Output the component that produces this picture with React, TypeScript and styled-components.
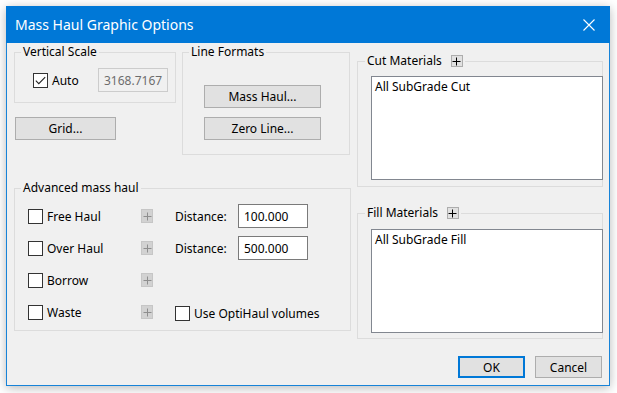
import React from 'react';
import styled, { createGlobalStyle } from 'styled-components';

const Global = createGlobalStyle`
  html, body { margin: 0; padding: 0; background: #ffffff; }
  body { font-family: "Noto Sans", "DejaVu Sans", sans-serif; font-size: 12px; color: #000; }
  * { box-sizing: border-box; }
`;

const Page = styled.div`
  width: 617px;
  height: 393px;
  padding: 6px 0 0 6px;
`;

const Window = styled.div`
  width: 604px;
  height: 380px;
  border: 1px solid #1783d8;
  border-top: none;
  background: #f0f0f0;
  box-shadow: 0 2px 10px rgba(0, 0, 0, 0.28);
  display: flex;
  flex-direction: column;
`;

const TitleBar = styled.div`
  height: 37px;
  margin: 0 -1px;
  background: #0078d7;
  color: #fff;
  display: flex;
  align-items: center;
  justify-content: space-between;
  padding-left: 9px;
  font-size: 14px;
`;

const Close = styled.div`
  width: 12px;
  height: 12px;
  margin-right: 15px;
  display: flex;
`;

const Body = styled.div`
  flex: 1;
  padding: 1px 6px 0 7px;
  display: flex;
  flex-direction: column;
`;

const Main = styled.div`
  display: flex;
  gap: 6px;
  align-items: flex-start;
`;

const LeftCol = styled.div`
  width: 337px;
  display: flex;
  flex-direction: column;
`;

const LeftTop = styled.div`
  display: flex;
  gap: 6px;
`;

const Stack = styled.div`
  display: flex;
  flex-direction: column;
`;

const RightCol = styled.div`
  width: 246px;
  margin-top: 9px;
  display: flex;
  flex-direction: column;
  gap: 18px;
`;

const Group = styled.fieldset<{ $w: number; $h: number }>`
  margin: 0;
  padding: 0;
  width: ${p => p.$w}px;
  height: ${p => p.$h}px;
  border: 1px solid #dcdcdc;
  min-width: 0;
`;

const Legend = styled.legend<{ $ml: number }>`
  margin-left: ${p => p.$ml}px;
  padding: 0 2px;
  height: 16px;
  line-height: 16px;
  font-size: 12px;
  display: flex;
  align-items: center;
`;

const ScaleRow = styled.div`
  display: flex;
  align-items: center;
  margin-top: 8px;
  padding-left: 18px;
`;

const CheckLabel = styled.label<{ $w?: number }>`
  display: flex;
  align-items: center;
  gap: 4px;
  ${p => (p.$w ? `width: ${p.$w}px;` : '')}
  white-space: nowrap;
`;

const Box = styled.span`
  width: 15px;
  height: 15px;
  border: 1px solid #333;
  background: #fff;
  display: flex;
  align-items: center;
  justify-content: center;
  flex: none;
`;

const TextBox = styled.div<{ $disabled?: boolean }>`
  width: 70px;
  height: 24px;
  border: 1px solid ${p => (p.$disabled ? '#cccccc' : '#7a7a7a')};
  background: ${p => (p.$disabled ? '#f0f0f0' : '#ffffff')};
  color: ${p => (p.$disabled ? '#6d6d6d' : '#000')};
  padding-left: 5px;
  display: flex;
  align-items: center;
  overflow: hidden;
  white-space: nowrap;
`;

const Button = styled.div<{ $w: number; $h?: number; $default?: boolean }>`
  width: ${p => p.$w}px;
  height: ${p => p.$h ?? 23}px;
  background: #e1e1e1;
  border: ${p => (p.$default ? '2px solid #0078d7' : '1px solid #adadad')};
  display: flex;
  align-items: center;
  justify-content: center;
`;

const GridButton = styled(Button)`
  margin: 14px 0 0 1px;
`;

const FormatButtons = styled.div`
  display: flex;
  flex-direction: column;
  gap: 9px;
  padding: 25px 0 0 21px;
`;

const AdvancedGroup = styled(Group)`
  margin-top: 25px;
`;

const AdvGrid = styled.div`
  display: grid;
  grid-template-columns: 113px 34px 63px 70px;
  grid-auto-rows: 32px;
  align-items: center;
  padding: 4px 0 0 13px;
`;

const Span2 = styled.div`
  grid-column: 3 / span 2;
  padding-top: 3px;
`;

const PlusBox = styled.span<{ $dim?: boolean }>`
  width: 12px;
  height: ${p => (p.$dim ? 14 : 12)}px;
  background: ${p => (p.$dim ? '#d2d2d2' : '#e1e1e1')};
  border: 1px solid ${p => (p.$dim ? '#c6c6c6' : '#adadad')};
  display: flex;
  align-items: center;
  justify-content: center;
`;

const LegendPlus = styled(PlusBox)`
  margin-left: 9px;
`;

const ListWrap = styled.div<{ $pt: number }>`
  padding: ${p => p.$pt}px 0 0 13px;
`;

const ListBox = styled.div`
  width: 232px;
  height: 104px;
  background: #fff;
  border: 1px solid #828790;
  padding: 2px 3px;
  line-height: 16px;
`;

const Footer = styled.div`
  display: flex;
  justify-content: flex-end;
  gap: 10px;
  margin: 17px 1px 0 0;
`;

const Plus = ({ color }: { color: string }) => (
  <svg width="9" height="9" viewBox="0 0 9 9">
    <path d="M4.5 0.5V8.5M0.5 4.5H8.5" stroke={color} strokeWidth="1" />
  </svg>
);

const Check = ({ checked }: { checked?: boolean }) => (
  <Box>
    {checked && (
      <svg width="11" height="9" viewBox="0 0 11 9">
        <path d="M0.8 4.6L3.8 7.6L10.2 1.2" fill="none" stroke="#222" strokeWidth="1.1" />
      </svg>
    )}
  </Box>
);

const rows = [
  { label: 'Free Haul', distance: '100.000' },
  { label: 'Over Haul', distance: '500.000' },
  { label: 'Borrow' },
  { label: 'Waste' },
];

export default function App() {
  return (
    <>
      <Global />
      <Page>
        <Window>
          <TitleBar>
            <span>Mass Haul Graphic Options</span>
            <Close>
              <svg width="12" height="12" viewBox="0 0 12 12">
                <path d="M0.5 0.5L11.5 11.5M11.5 0.5L0.5 11.5" stroke="#fff" strokeWidth="1.1" />
              </svg>
            </Close>
          </TitleBar>
          <Body>
            <Main>
              <LeftCol>
                <LeftTop>
                  <Stack>
                    <Group $w={162} $h={59}>
                      <Legend $ml={6}>Vertical Scale</Legend>
                      <ScaleRow>
                        <CheckLabel $w={65}>
                          <Check checked />
                          Auto
                        </CheckLabel>
                        <TextBox $disabled>3168.7167</TextBox>
                      </ScaleRow>
                    </Group>
                    <GridButton $w={101}>Grid...</GridButton>
                  </Stack>
                  <Group $w={168} $h={111}>
                    <Legend $ml={6}>Line Formats</Legend>
                    <FormatButtons>
                      <Button $w={117}>Mass Haul...</Button>
                      <Button $w={117}>Zero Line...</Button>
                    </FormatButtons>
                  </Group>
                </LeftTop>
                <AdvancedGroup $w={337} $h={151}>
                  <Legend $ml={6}>Advanced mass haul</Legend>
                  <AdvGrid>
                    {rows.map((r, i) => (
                      <React.Fragment key={r.label}>
                        <CheckLabel>
                          <Check />
                          {r.label}
                        </CheckLabel>
                        <PlusBox $dim>
                          <Plus color="#8e8e8e" />
                        </PlusBox>
                        {r.distance ? (
                          <>
                            <span>Distance:</span>
                            <TextBox>{r.distance}</TextBox>
                          </>
                        ) : i === 3 ? (
                          <Span2>
                            <CheckLabel>
                              <Check />
                              Use OptiHaul volumes
                            </CheckLabel>
                          </Span2>
                        ) : (
                          <Span2 />
                        )}
                      </React.Fragment>
                    ))}
                  </AdvGrid>
                </AdvancedGroup>
              </LeftCol>
              <RightCol>
                <Group $w={246} $h={134}>
                  <Legend $ml={7}>
                    Cut Materials
                    <LegendPlus>
                      <Plus color="#000" />
                    </LegendPlus>
                  </Legend>
                  <ListWrap $pt={7}>
                    <ListBox>All SubGrade Cut</ListBox>
                  </ListWrap>
                </Group>
                <Group $w={246} $h={134}>
                  <Legend $ml={7}>
                    Fill Materials
                    <LegendPlus>
                      <Plus color="#000" />
                    </LegendPlus>
                  </Legend>
                  <ListWrap $pt={8}>
                    <ListBox>All SubGrade Fill</ListBox>
                  </ListWrap>
                </Group>
              </RightCol>
            </Main>
            <Footer>
              <Button $w={67} $h={22} $default>OK</Button>
              <Button $w={67} $h={22}>Cancel</Button>
            </Footer>
          </Body>
        </Window>
      </Page>
    </>
  );
}
